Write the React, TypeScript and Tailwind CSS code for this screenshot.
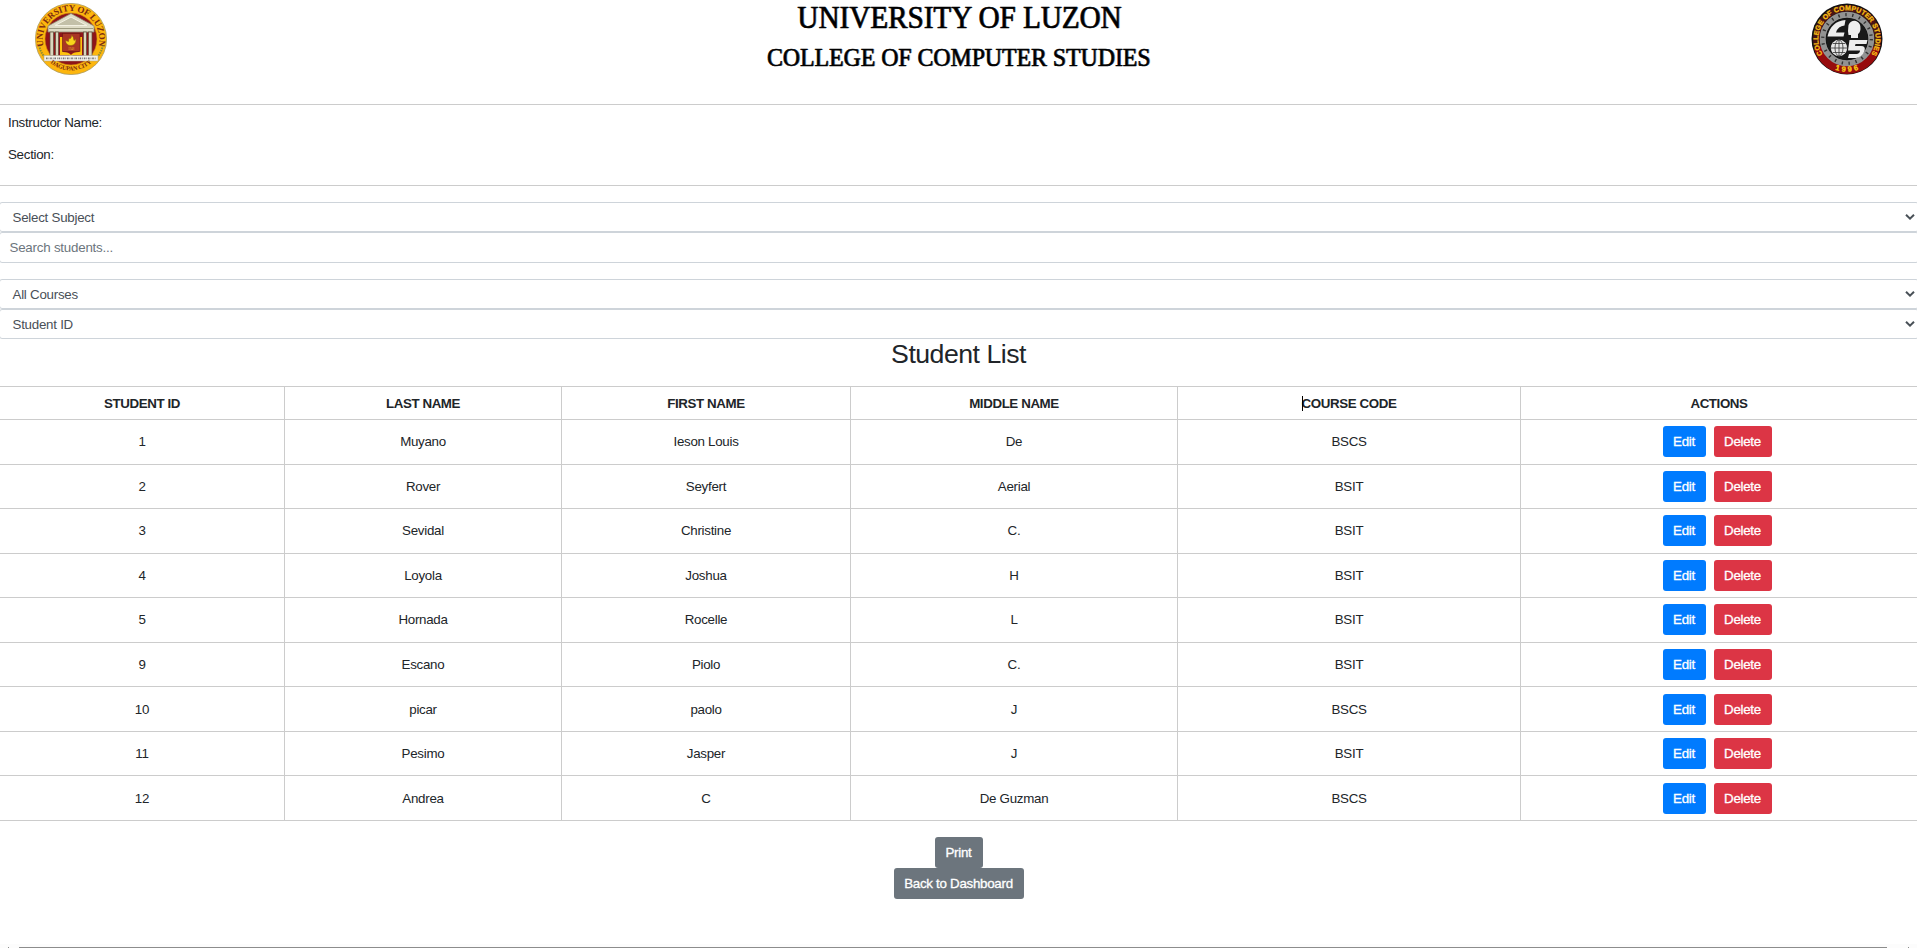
import React from "react";

type Student = [string, string, string, string, string];

const students: Student[] = [
  ["1", "Muyano", "Ieson Louis", "De", "BSCS"],
  ["2", "Rover", "Seyfert", "Aerial", "BSIT"],
  ["3", "Sevidal", "Christine", "C.", "BSIT"],
  ["4", "Loyola", "Joshua", "H", "BSIT"],
  ["5", "Hornada", "Rocelle", "L", "BSIT"],
  ["9", "Escano", "Piolo", "C.", "BSIT"],
  ["10", "picar", "paolo", "J", "BSCS"],
  ["11", "Pesimo", "Jasper", "J", "BSIT"],
  ["12", "Andrea", "C", "De Guzman", "BSCS"],
];

const headings = ["STUDENT ID", "LAST NAME", "FIRST NAME", "MIDDLE NAME", "COURSE CODE", "ACTIONS"];

function UniversitySeal() {
  return (
    <svg viewBox="0 0 72 72" className="block size-[72px]" aria-label="University of Luzon seal">
      <defs>
        <path id="ulTop" d="M8.200 41 A28.200 28.200 0 1 1 63.800 41" />
        <path id="ulBottom" d="M14 58.500 A31.500 31.500 0 0 0 58 58.500" />
      </defs>
      <circle cx="36" cy="36" r="35.600" fill="#fdb60d" stroke="#a99a62" strokeWidth="0.800" />
      <circle cx="36" cy="36" r="26" fill="#8f1519" stroke="#c98a12" strokeWidth="0.600" />
      <path d="M4 42 Q6 52 13 57" fill="none" stroke="#8a8b35" strokeWidth="2" strokeDasharray="1.500 1" />
      <path d="M68 42 Q66 52 59 57" fill="none" stroke="#8a8b35" strokeWidth="2" strokeDasharray="1.500 1" />
      <path d="M36 10.500 L59 23 L59 29 L13 29 L13 23 Z" fill="#dedbc5" stroke="#8f8c72" strokeWidth="0.800" />
      <path d="M36 14 L52 22.500 L20 22.500 Z" fill="#c3c0a8" stroke="#f3f1e2" strokeWidth="1" />
      <path d="M14 25.500 H58" stroke="#8b896f" strokeWidth="0.800" />
      <g fill="#d9d6be" stroke="#5c4a38" strokeWidth="0.700">
        <rect x="15" y="29" width="3.500" height="24" />
        <rect x="20.500" y="29" width="3" height="24" />
        <rect x="48.500" y="29" width="3" height="24" />
        <rect x="53.500" y="29" width="3.500" height="24" />
      </g>
      <path d="M25 34 L28 34 L28 49 Q34 49 36 52 Q38 49 44 49 L44 34 L47 34 L47 52 L38 52 L36 54 L34 52 L25 52 Z" fill="#fdc20f" />
      <rect x="27.500" y="30.500" width="17.500" height="18" fill="#a93524" stroke="#6c1712" strokeWidth="0.600" />
      <path d="M30.500 37.500 Q31 42.500 36 42.500 Q41 42 41 36 L39 37.500 Q39 34 36.500 32 Q37 34.500 35 36 L34 35 L33.500 38.500 Z" fill="#f8d51c" stroke="#8c5b0c" strokeWidth="0.500" />
      <text x="36" y="46.800" textAnchor="middle" fontSize="3.600" fill="#e3a22a" className="font-['Liberation_Serif',serif]">1948</text>
      <rect x="9" y="52.500" width="54" height="5.500" fill="#f3f1e9" stroke="#aaa58c" strokeWidth="0.500" />
      <path d="M11 55.300 H61" stroke="#777" strokeWidth="1.800" strokeDasharray="1.600 1 0.700 0.900" />
      <text fontSize="9" letterSpacing="-0.150" fill="#7a2a12" className="font-['Liberation_Serif',serif] font-bold">
        <textPath href="#ulTop" startOffset="50%" textAnchor="middle">UNIVERSITY OF LUZON</textPath>
      </text>
      <text fontSize="6.200" letterSpacing="-0.250" fill="#7a2a12" className="font-['Liberation_Serif',serif] font-bold">
        <textPath href="#ulBottom" startOffset="50%" textAnchor="middle">DAGUPAN CITY</textPath>
      </text>
    </svg>
  );
}

function CollegeSeal() {
  return (
    <svg viewBox="0 0 72 72" className="block size-[72px]" aria-label="College of Computer Studies seal">
      <defs>
        <path id="ccTop" d="M14.500 55 A28.700 28.700 0 1 1 57.500 55" />
        <path id="ccBottom" d="M19 64 A33 33 0 0 0 53 64" />
      </defs>
      <circle cx="36" cy="36" r="35.500" fill="#111111" />
      <circle cx="36" cy="36" r="30.800" fill="none" stroke="#4a1413" strokeWidth="6.500" />
      <path d="M3 46 A34.300 34.300 0 0 0 69 46 L61 43 A27 27 0 0 1 11 43 Z" fill="#970b0d" />
      <circle cx="36" cy="36" r="24.300" fill="none" stroke="#929292" strokeWidth="6" />
      <circle cx="36" cy="36" r="24.300" fill="none" stroke="#333333" strokeWidth="3.200" strokeDasharray="1.400 5.600" />
      <circle cx="36" cy="36" r="20.800" fill="#181818" />
      <path d="M34.500 17 Q20 18 16.500 33.500 H32.500 L33.500 29.500 H25 Q27 23 33.500 22.500 Z" fill="#ededed" />
      <path d="M37 28 L37.500 22 Q40 17 45 18 Q50 20 49.500 26 Q49 30 47 31 V35 H40 V32 H37.500 Z" fill="#ededed" />
      <circle cx="28" cy="45" r="8.200" fill="#e7e7e7" />
      <path d="M20 45 H36 M28 37 V53 M22 40.500 H34 M22 49.500 H34" stroke="#353535" strokeWidth="0.800" />
      <ellipse cx="28" cy="45" rx="4" ry="8" fill="none" stroke="#353535" strokeWidth="0.800" />
      <path d="M38.500 37 H56.500 L55.500 41 H44.500 L44 43 H50 Q55 43 53.500 48 Q51 54 45 55 H37 L38 51 H46 Q49 50 49 47.500 H37 Z" fill="#ededed" />
      <text fontSize="7" letterSpacing="0.080" fill="#f6bd13" stroke="#f6bd13" strokeWidth="0.300" className="font-['Liberation_Sans',sans-serif] font-bold">
        <textPath href="#ccTop" startOffset="50%" textAnchor="middle">COLLEGE OF COMPUTER STUDIES</textPath>
      </text>
      <text fontSize="7.500" letterSpacing="2.400" fill="#fbd018" stroke="#fbd018" strokeWidth="0.300" className="font-['Liberation_Sans',sans-serif] font-bold">
        <textPath href="#ccBottom" startOffset="53%" textAnchor="middle">1996</textPath>
      </text>
    </svg>
  );
}

function SelectRow({ label }: { label: string }) {
  return (
    <div className="-mr-[2px] -ml-px flex h-[30px] items-center justify-between rounded-[3px] border border-[#ced4da] bg-white pr-[3px] pl-[12.500px] tracking-[-0.250px] text-[#495057]">
      <span className="pt-px">{label}</span>
      <svg viewBox="0 0 10 6" className="h-[6px] w-[10px]" fill="none" stroke="currentColor" strokeWidth="2">
        <path d="M1 0.800 L5 4.600 L9 0.800" />
      </svg>
    </div>
  );
}

function Button({ children, color }: { children: React.ReactNode; color: string }) {
  return (
    <button className={`block h-[31px] rounded-[3px] text-center text-[13.330px] leading-[31px] tracking-[-0.280px] text-white [-webkit-text-stroke:0.300px_white] ${color}`}>
      {children}
    </button>
  );
}

export default function App() {
  return (
    <div className="flex h-[948px] flex-col overflow-hidden bg-white font-['Liberation_Sans',Arial,sans-serif] text-[13.330px] tracking-[-0.280px] text-[#212529]">
      <header className="flex h-[105px] shrink-0 justify-between border-b border-[#cccccc] pr-[34px] pl-[35px]">
        <div className="pt-[3px]">
          <UniversitySeal />
        </div>
        <div className="flex flex-col items-center tracking-normal text-black font-['Liberation_Serif',serif] [-webkit-text-stroke:0.600px_black] [text-shadow:1px_0_0_#9aa7b5]">
          <h1 className="scale-x-[0.940] text-[31px] leading-[35px] whitespace-nowrap">UNIVERSITY OF LUZON</h1>
          <h2 className="mt-[7px] scale-x-[0.932] text-[25.500px] leading-[32px] whitespace-nowrap">COLLEGE OF COMPUTER STUDIES</h2>
        </div>
        <div className="pt-[3px]">
          <CollegeSeal />
        </div>
      </header>

      <section className="flex h-[81px] shrink-0 flex-col gap-[12px] border-b border-[#cccccc] pt-[8px] pl-[8px] leading-[20px]">
        <p>Instructor Name:</p>
        <p>Section:</p>
      </section>

      <section className="mt-[16px] shrink-0">
        <SelectRow label="Select Subject" />
        <div className="-mr-[2px] mb-[16px] -ml-px flex h-[31px] items-center rounded-[3px] border border-[#ced4da] pl-[9.500px] tracking-[-0.220px] text-[#6c757d]">Search students...</div>
        <SelectRow label="All Courses" />
        <SelectRow label="Student ID" />
      </section>

      <h2 className="h-[47px] shrink-0 text-center text-[26.670px] leading-[31px] tracking-[-0.500px]">Student List</h2>

      <table className="h-[435px] w-full shrink-0 table-fixed border-collapse border-y border-[#cccccc] text-center">
        <colgroup>
          <col className="w-[284.500px]" />
          <col className="w-[277px]" />
          <col className="w-[289px]" />
          <col className="w-[327px]" />
          <col className="w-[343px]" />
          <col />
        </colgroup>
        <thead>
          <tr className="h-[33px]">
            {headings.map((heading) => (
              <th key={heading} className="border-r border-b border-[#cccccc] px-0 pt-px pb-0 font-bold tracking-[-0.400px] last:border-r-0">
                <span className="relative">
                  {heading === "COURSE CODE" && <i className="absolute top-0 left-0 h-[15px] w-px bg-black" />}
                  {heading}
                </span>
              </th>
            ))}
          </tr>
        </thead>
        <tbody>
          {students.map((student) => (
            <tr key={student[0]} className="h-[44.560px]">
              {student.map((value, index) => (
                <td key={index} className="border-r border-b border-[#cccccc] px-0 pt-px pb-0">
                  {value}
                </td>
              ))}
              <td className="border-b border-[#cccccc] p-0">
                <div className="flex justify-center gap-[8px] pr-[4px]">
                  <Button color="w-[43px] bg-[#007bff]">Edit</Button>
                  <Button color="w-[58px] bg-[#dc3545]">Delete</Button>
                </div>
              </td>
            </tr>
          ))}
        </tbody>
      </table>

      <div className="mt-[16px] flex shrink-0 flex-col items-center">
        <Button color="w-[48px] bg-[#6c757d]">Print</Button>
        <Button color="w-[130px] bg-[#6c757d]">Back to Dashboard</Button>
      </div>

      <footer className="mt-auto flex h-[4px] shrink-0 items-end bg-[#fcfcfc] px-[8px]">
        <i className="h-px w-px bg-[#8c8c8c]" />
        <i className="mr-[21px] ml-[10px] h-px flex-1 bg-[#8c8c8c]" />
        <i className="h-px w-px bg-[#8c8c8c]" />
      </footer>
    </div>
  );
}
